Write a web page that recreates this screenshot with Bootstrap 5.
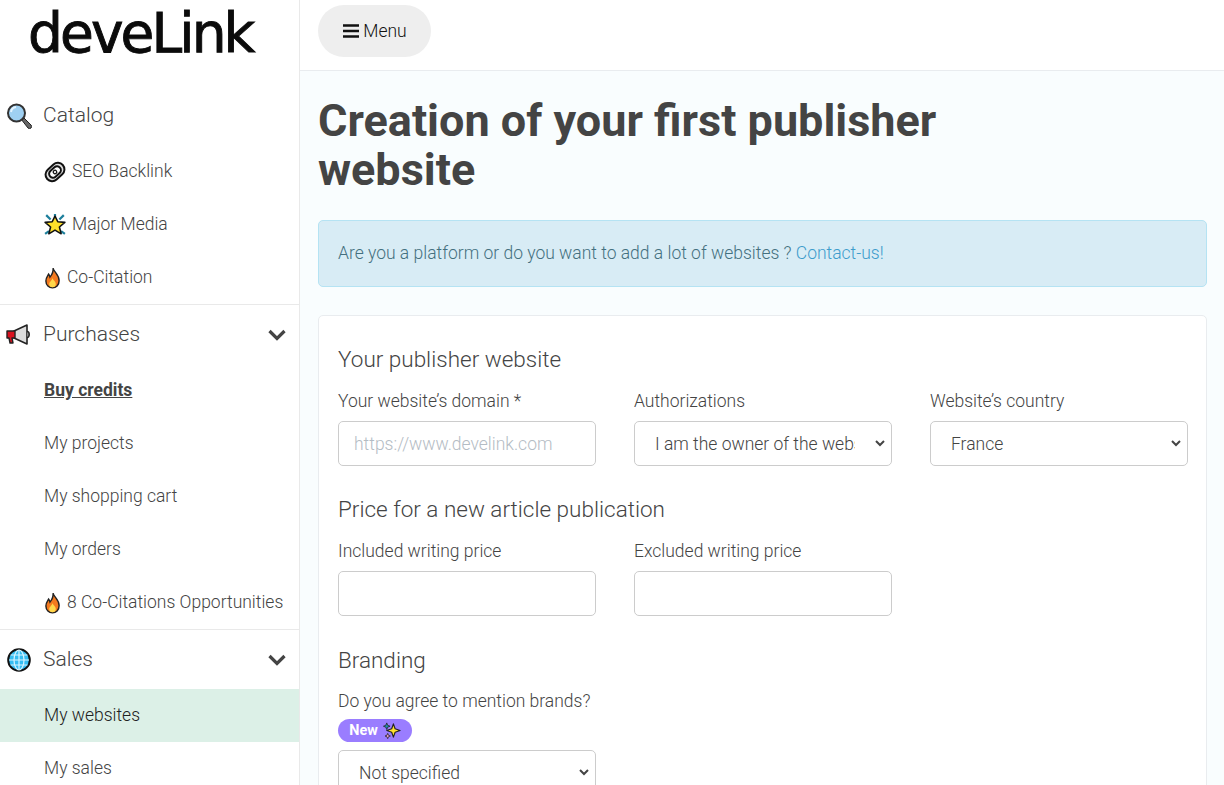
<!DOCTYPE html>
<html lang="en">
<head>
    <meta charset="UTF-8">
    <meta name="viewport" content="width=device-width, initial-scale=1.0">
    <title>Develink</title>
    <link rel="stylesheet" href="https://cdn.jsdelivr.net/npm/bootstrap@5.3.0/dist/css/bootstrap.min.css">
    <style>
        html, body { height: 100%; overflow: hidden; }
        body { font-family: Roboto, "Liberation Sans", sans-serif; font-weight: 300; font-size: 17.5px; color: #444; background: #fff; }
        .page-wrap { height: 785px; overflow: hidden; }
        .side-col { width: 300px; flex: 0 0 300px; border-right: 1px solid #e9e9e9; }
        .logo-box { height: 86px; padding-left: 28px; }
        .logo-text { display: block; font-family: "DejaVu Sans", sans-serif; font-weight: 400; font-size: 55px; line-height: 66px; color: #0b0b0b; letter-spacing: -2.9px; -webkit-text-stroke: 0.9px #0b0b0b; }
        .side-head { height: 59px; padding: 0 12px 0 6px; font-size: 21px; color: #444; }
        .side-head svg.emo { width: 26px; height: 26px; margin-right: 11px; }
        .side-sep { border-top: 1px solid #e9e9e9; }
        .side-link { height: 53px; padding: 0 0 0 44px; font-size: 17.5px; color: #444; text-decoration: none; }
        .side-link svg.emo { width: 22px; height: 22px; margin: 0 6px 0 0; flex: none; }
        .side-link svg.flame { width: 17px; height: 22px; margin: 0 6px 0 0; flex: none; }
        .side-link.cur { font-weight: 700; text-decoration: underline; }
        .side-link.act { background: #dcf0e7; color: #222; }
        .main-col { min-width: 0; background: #f9fdfe; }
        .top-strip { height: 71px; padding: 5px 18px; background: #fff; border-bottom: 1px solid #e9ecef; }
        .menu-btn { width: 113px; height: 52px; border-radius: 26px; background: #eee; border: 0; color: #111; font-size: 17.5px; font-weight: 300; padding: 0 0 0 1px; }
        .content-wrap { padding: 25px 17px 0 18px; }
        .page-title { font-size: 45px; line-height: 49px; font-weight: 700; color: #444; max-width: 660px; margin: 0 0 26px; }
        .info-box { height: 67px; padding: 0 19px 1px; background: #d8ecf5; border: 1px solid #b5e3f3; border-radius: 5px; color: #44707f; margin-bottom: 28px; }
        .info-box a { color: #3d9ccc; text-decoration: none; }
        .form-box { background: #fff; border: 1px solid #e9ecef; border-radius: 5px; padding: 29px 18px 0 19px; }
        .form-row { --bs-gutter-x: 38px; --bs-gutter-y: 0; }
        .row-gap { margin-bottom: 29px; }
        .row-gap-lg { margin-bottom: 30px; }
        .sec-title { font-size: 22.5px; line-height: 28px; font-weight: 300; color: #444; margin: 0 0 17px; }
        .sec-title.close-b { margin-bottom: 16px; }
        .fld-label { line-height: 22px; margin-bottom: 9px; display: block; color: #444; white-space: nowrap; }
        .fld-label.tight { margin-bottom: 7px; }
        .fld-ctl { height: 45px; border-radius: 5px; border: 1px solid #ccc; font-size: 17.5px; font-weight: 300; color: #444; padding: 0 15px; }
        .fld-ctl::placeholder { color: #b4bcc4; }
        .form-select.fld-ctl { padding: 2px 36px 0 20px; background-position: right 6px center; background-size: 10px 7px;
            background-image: url("data:image/svg+xml,%3csvg xmlns='http://www.w3.org/2000/svg' viewBox='0 0 10 7'%3e%3cpath fill='none' stroke='%23444' stroke-width='2' d='M1 1l4 4 4-4'/%3e%3c/svg%3e"); }
        .new-tag { width: 74px; height: 23px; background: #9a7dff; color: #fff; font-size: 14.4px; font-weight: 700; border-radius: 12px; margin-bottom: 8px; gap: 4px; }
        .new-tag svg { width: 19px; height: 19px; }
    </style>
</head>
<body>
    <div class="d-flex page-wrap">
        <nav class="side-col">
            <div class="logo-box"><span class="logo-text">deveLink</span></div>

            <div class="side-head d-flex align-items-center">
                <svg class="emo" viewBox="0 0 26 26"><path d="M15 16l2-2 8 8a1.600 1.600 0 0 1-3 3z" fill="#666" stroke="#222" stroke-width="1"/><circle cx="10.500" cy="10" r="8.500" fill="#9fd0f2" stroke="#333" stroke-width="2"/><path d="M5 9a6 6 0 0 1 5-5" fill="none" stroke="#e4f4ff" stroke-width="2"/></svg>
                <span>Catalog</span>
            </div>
            <a class="side-link d-flex align-items-center" href="#"><svg class="emo" viewBox="0 0 20 20"><g fill="none" stroke="#111" transform="rotate(-42 10 10)"><rect x="0.500" y="4" width="19" height="12" rx="6" fill="#ddd" stroke-width="1.800"/><rect x="4" y="6.500" width="12" height="7" rx="3.500" fill="#fff" stroke-width="1.800"/><circle cx="10" cy="10" r="1.600" stroke-width="1.200"/></g></svg>SEO Backlink</a>
            <a class="side-link d-flex align-items-center" href="#"><svg class="emo" viewBox="0 0 20 20"><path d="M2 1l4 4M18 1l-4 4M1 18l3.500-2.500M19 18l-3.500-2.500M10 0v3" stroke="#1d7f9c" stroke-width="2"/><path d="M10 2l2.500 5 6.500.6-5 4.200 1.600 6.200L10 14.600 4.400 18 6 11.800 1 7.600 7.500 7z" fill="#ffe02a" stroke="#111" stroke-width="1.400" stroke-linejoin="round"/></svg>Major Media</a>
            <a class="side-link d-flex align-items-center" href="#"><svg class="flame" viewBox="3 0 14 20"><path d="M10.500 1c.5 3.500 5.500 5.500 5.500 11.500 0 4-2.800 6.500-6 6.500s-6-2.500-6-6.300c0-3 1.700-4.500 2.500-6.200.7 1 1 1.700 1.200 2.700C9.500 7 11 4.500 10.500 1z" fill="#f47a1f" stroke="#222" stroke-width="1.300"/><path d="M10 10c.5 2 3 3 3 5.500a3 3 0 0 1-6 0c0-2 2.500-3 3-5.500z" fill="#ffd84a"/></svg>Co-Citation</a>

            <div class="side-sep"></div>
            <div class="side-head d-flex align-items-center">
                <svg class="emo" viewBox="0 0 26 26"><path d="M8 9l13-6v19L8 16z" fill="#ddd" stroke="#222" stroke-width="1.600" stroke-linejoin="round"/><path d="M1 9h8v7H6l1 5H4l-1-5H1z" fill="#d9121f" stroke="#222" stroke-width="1.400" stroke-linejoin="round"/><path d="M21 9.500c3 0 3 6 0 6" fill="#888" stroke="#222" stroke-width="1.400"/></svg>
                <span>Purchases</span>
                <svg class="ms-auto" width="20" height="14" viewBox="0 0 20 14"><path d="M2.500 3l7.500 7.500L17.500 3" fill="none" stroke="#444" stroke-width="3.200"/></svg>
            </div>
            <a class="side-link cur d-flex align-items-center" href="#">Buy credits</a>
            <a class="side-link d-flex align-items-center" href="#">My projects</a>
            <a class="side-link d-flex align-items-center" href="#">My shopping cart</a>
            <a class="side-link d-flex align-items-center" href="#">My orders</a>
            <a class="side-link d-flex align-items-center" href="#"><svg class="flame" viewBox="3 0 14 20"><path d="M10.500 1c.5 3.500 5.500 5.500 5.500 11.500 0 4-2.800 6.500-6 6.500s-6-2.500-6-6.300c0-3 1.700-4.500 2.500-6.200.7 1 1 1.700 1.200 2.700C9.500 7 11 4.500 10.500 1z" fill="#f47a1f" stroke="#222" stroke-width="1.300"/><path d="M10 10c.5 2 3 3 3 5.500a3 3 0 0 1-6 0c0-2 2.500-3 3-5.500z" fill="#ffd84a"/></svg>8 Co-Citations Opportunities</a>

            <div class="side-sep"></div>
            <div class="side-head d-flex align-items-center">
                <svg class="emo" viewBox="0 0 26 26"><circle cx="13" cy="13" r="10.800" fill="#35bdf2" stroke="#111" stroke-width="2"/><g fill="none" stroke="#d8f4ff" stroke-width="1.200"><ellipse cx="13" cy="13" rx="5" ry="10"/><path d="M13 3v20M3 13h20M4.500 8h17M4.500 18h17"/></g></svg>
                <span>Sales</span>
                <svg class="ms-auto" width="20" height="14" viewBox="0 0 20 14"><path d="M2.500 3l7.500 7.500L17.500 3" fill="none" stroke="#444" stroke-width="3.200"/></svg>
            </div>
            <a class="side-link act d-flex align-items-center" href="#">My websites</a>
            <a class="side-link d-flex align-items-center" href="#">My sales</a>
        </nav>

        <div class="main-col flex-grow-1">
            <div class="top-strip">
                <button type="button" class="menu-btn d-inline-flex align-items-center justify-content-center gap-1">
                    <svg width="16" height="14" viewBox="0 0 16 14"><path d="M0 1.500h16M0 7h16M0 12.500h16" stroke="#111" stroke-width="2.400"/></svg>
                    Menu
                </button>
            </div>
            <div class="content-wrap">
                <h1 class="page-title">Creation of your first publisher website</h1>
                <div class="info-box d-flex align-items-center">
                    <span>Are you a platform or do you want to add a lot of websites ? <a href="#">Contact-us!</a></span>
                </div>
                <div class="form-box">
                    <h2 class="sec-title">Your publisher website</h2>
                    <div class="row form-row row-gap">
                        <div class="col-4">
                            <label class="fld-label">Your website’s domain *</label>
                            <input type="text" class="form-control fld-ctl" placeholder="https://www.develink.com">
                        </div>
                        <div class="col-4">
                            <label class="fld-label">Authorizations</label>
                            <select class="form-select fld-ctl"><option>I am the owner of the website</option></select>
                        </div>
                        <div class="col-4">
                            <label class="fld-label">Website’s country</label>
                            <select class="form-select fld-ctl"><option>France</option></select>
                        </div>
                    </div>
                    <h2 class="sec-title">Price for a new article publication</h2>
                    <div class="row form-row row-gap-lg">
                        <div class="col-4">
                            <label class="fld-label">Included writing price</label>
                            <input type="text" class="form-control fld-ctl">
                        </div>
                        <div class="col-4">
                            <label class="fld-label">Excluded writing price</label>
                            <input type="text" class="form-control fld-ctl">
                        </div>
                    </div>
                    <h2 class="sec-title close-b">Branding</h2>
                    <div class="row form-row">
                        <div class="col-4">
                            <label class="fld-label tight">Do you agree to mention brands?</label>
                            <span class="new-tag d-flex align-items-center justify-content-center">New
                                <svg viewBox="0 0 20 20"><path d="M12 3l1.800 5.200L19 10l-5.200 1.800L12 17l-1.800-5.200L5 10l5.200-1.800z" fill="#ffe02e" stroke="#222" stroke-width="1.200" stroke-linejoin="round"/><path d="M5 2l1 2.500L8.500 5.500 6 6.500 5 9 4 6.500 1.500 5.500 4 4.500z" fill="#1d8fa8" stroke="#222" stroke-width=".8"/><path d="M6 13l.8 2 2 .8-2 .8-.8 2-.8-2-2-.8 2-.8z" fill="#f3a0c8" stroke="#222" stroke-width=".8"/></svg>
                            </span>
                            <select class="form-select fld-ctl"><option>Not specified</option></select>
                        </div>
                    </div>
                </div>
            </div>
        </div>
    </div>
    <script src="https://cdn.jsdelivr.net/npm/bootstrap@5.3.0/dist/js/bootstrap.bundle.min.js"></script>
</body>
</html>
